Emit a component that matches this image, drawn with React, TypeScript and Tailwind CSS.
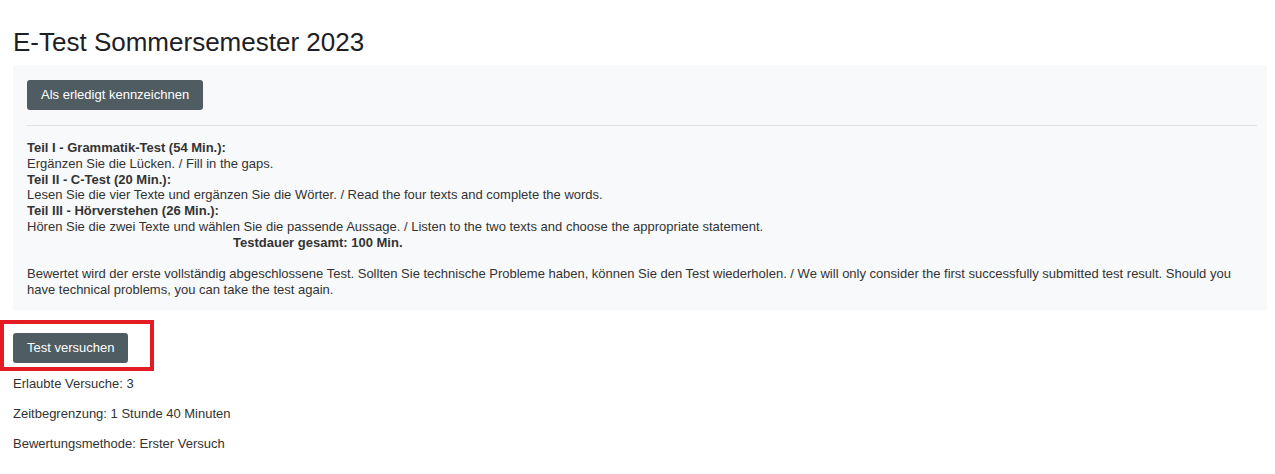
export default function App() {
  return (
    <main className="relative min-h-[474px] bg-white pt-[26px] pr-[8px] pl-[13px] text-[#333] [font-family:'Liberation_Sans',Arial,sans-serif]">
      <h1 className="text-[26px] leading-[32px] text-[#1d2125]">E-Test Sommersemester 2023</h1>

      <section className="mt-[7px] bg-[#f8f9fa] pt-[15px] pr-[10px] pb-[12px] pl-[14px] text-[13px] leading-[16px]">
        <button className="h-[30px] rounded-[3px] bg-[#4f5d63] px-[14px] text-[13px] text-white">Als erledigt kennzeichnen</button>
        <hr className="mt-[15px] mb-[14px] border-t border-[#dee2e6]" />
        <div className="leading-[15.8px]">
          <p className="font-bold">Teil I - Grammatik-Test (54 Min.):</p>
          <p>Ergänzen Sie die Lücken. / Fill in the gaps.</p>
          <p className="font-bold">Teil II - C-Test (20 Min.):</p>
          <p>Lesen Sie die vier Texte und ergänzen Sie die Wörter. / Read the four texts and complete the words.</p>
          <p className="font-bold">Teil III - Hörverstehen (26 Min.):</p>
          <p>Hören Sie die zwei Texte und wählen Sie die passende Aussage. / Listen to the two texts and choose the appropriate statement.</p>
          <p className="pl-[206px] font-bold">Testdauer gesamt: 100 Min.</p>
          <p className="mt-[15.8px]">
            Bewertet wird der erste vollständig abgeschlossene Test. Sollten Sie technische Probleme haben, können Sie den Test wiederholen. / We will only consider the first successfully submitted test result. Should you have technical problems, you can take the test again.
          </p>
        </div>
      </section>

      <div className="pt-[23px]">
        <button className="h-[30px] rounded-[3px] bg-[#4f5d63] px-[14px] text-[13px] text-white">Test versuchen</button>
      </div>
      <div className="mt-[13px] space-y-[14px] text-[13px] leading-[16px]">
        <p>Erlaubte Versuche: 3</p>
        <p>Zeitbegrenzung: 1 Stunde 40 Minuten</p>
        <p>Bewertungsmethode: Erster Versuch</p>
      </div>

      <div className="pointer-events-none absolute left-0 top-[320px] h-[51px] w-[154px] border-[4px] border-[#e31b23]" />
    </main>
  );
}
